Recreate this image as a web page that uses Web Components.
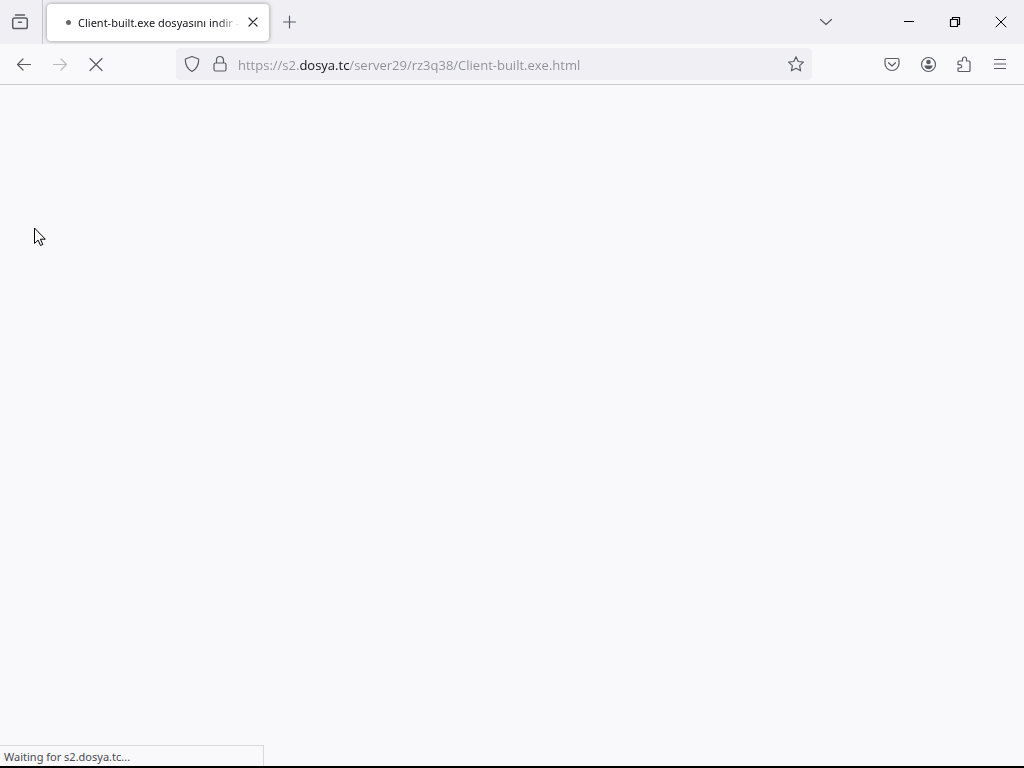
<!DOCTYPE html>
<html lang="en">
<head>
<meta charset="utf-8">
<meta name="viewport" content="width=device-width, initial-scale=1">
<title>Client-built.exe dosyasını indir</title>
<style>
    html, body {
        height: 100%;
        margin: 0;
    }

    body {
        font-family: "Noto Sans", "Open Sans", sans-serif;
        font-size: 11px;
        color: #15141a;
        background: #f9f9fb;
    }
</style>
</head>
<body>
<browser-window>
    <tab-strip slot="tabs">
        <browser-tab>Client-built.exe dosyasını indir - dosya.tc</browser-tab>
    </tab-strip>
    <nav-bar slot="toolbar">
        <address-bar url="https://s2.dosya.tc/server29/rz3q38/Client-built.exe.html"></address-bar>
    </nav-bar>
    <mouse-pointer></mouse-pointer>
    <status-panel slot="status">Waiting for s2.dosya.tc...</status-panel>
</browser-window>

<script>
const icons = {
    view: `<path d="M4.500 2h9M3.500 5h11a1.800 1.800 0 0 1 1.800 1.800v7a1.800 1.800 0 0 1-1.800 1.800h-11a1.800 1.800 0 0 1-1.800-1.800v-7A1.800 1.800 0 0 1 3.500 5zM7.500 9.300h3" stroke-width="1.500"/>`,
    plus: `<path d="M8.500 3v12M2.500 9h12"/>`,
    close: `<path d="M5 5l8 8M13 5l-8 8"/>`,
    chevron: `<path d="M3.500 6.500l5.500 5 5.500-5"/>`,
    minimize: `<path d="M4 8.500h10" stroke-width="1" stroke-linecap="butt"/>`,
    restore: `<path d="M4.500 6.500h7v7h-7zM6.500 6.500v-2h7v7h-2" stroke-width="1.200" stroke-linejoin="miter"/>`,
    exit: `<path d="M4 4l10 10M14 4L4 14" stroke-width="1"/>`,
    back: `<path d="M15.500 9.500H2.500M8 4L2.500 9.500 8 15"/>`,
    forward: `<path d="M2.500 9.500h13M10 4l5.500 5.500L10 15"/>`,
    stop: `<path d="M3 3.500l12 12M15 3.500l-12 12"/>`,
    shield: `<path d="M9 1.500l6 2.300c.5.200.7.500.7 1 0 5.200-2.200 9.200-6.700 11.700C4.500 14 2.300 10 2.300 4.800c0-.5.200-.8.700-1z"/>`,
    lock: `<path d="M4.500 8h9a1.500 1.500 0 0 1 1.500 1.500v5a1.500 1.500 0 0 1-1.500 1.500h-9A1.500 1.500 0 0 1 3 14.500v-5A1.500 1.500 0 0 1 4.500 8zM5.500 8V5a3.500 3.500 0 0 1 7 0v3"/>`,
    star: `<path d="M9 1.800l2.200 4.700 5.200.6-3.800 3.500 1 5.200L9 13.300l-4.600 2.500 1-5.200L1.600 7.100l5.200-.6z"/>`,
    pocket: `<path d="M3.500 3.500h11A1.500 1.500 0 0 1 16 5v3.500a7 7 0 0 1-14 0V5a1.500 1.500 0 0 1 1.500-1.500zM5.500 7.700L9 11l3.500-3.300"/>`,
    account: `<circle cx="9.500" cy="9.500" r="7"/><circle cx="9.500" cy="7" r="2.300" fill="currentColor" stroke="none"/><path d="M5.300 10.500h8.400c-.3 2.400-2 3.700-4.200 3.700s-3.900-1.300-4.200-3.700z" fill="currentColor" stroke="none"/>`,
    puzzle: `<path d="M4 6h3.500V4a2 2 0 0 1 4 0v2H14a1 1 0 0 1 1 1v8.500a1 1 0 0 1-1 1H4a1 1 0 0 1-1-1V13h2a1.700 1.700 0 0 0 0-3.400H3V7a1 1 0 0 1 1-1z"/>`,
    menu: `<path d="M3.500 4.500h11M3.500 9h11M3.500 13.500h11"/>`
};

function svgIcon(name) {
    return `<svg width="18" height="18" viewBox="0 0 18 18" fill="none" stroke="currentColor" stroke-width="1.200" stroke-linecap="round" stroke-linejoin="round" aria-hidden="true">${icons[name]}</svg>`;
}

class IconButton extends HTMLElement {
    constructor() {
        super();
        this.attachShadow({mode: "open"});
    }

    connectedCallback() {
        const disabled = this.hasAttribute("disabled") ? "disabled" : "";
        this.shadowRoot.innerHTML = `
            <style>
                :host {
                    display: block;
                    flex: none;
                    width: 36px;
                    height: 32px;
                    color: #5b5b66;
                }

                button {
                    display: flex;
                    align-items: center;
                    justify-content: center;
                    width: 100%;
                    height: 100%;
                    padding: 0;
                    border: 0;
                    border-radius: 4px;
                    background: none;
                    color: inherit;
                }

                button:hover:enabled {
                    background: rgba(91, 91, 102, 0.12);
                }

                button:disabled {
                    opacity: 0.4;
                }
            </style>
            <button type="button" aria-label="${this.getAttribute("label")}" ${disabled}>${svgIcon(this.getAttribute("icon"))}</button>
        `;
    }
}

class BrowserTab extends HTMLElement {
    constructor() {
        super();
        this.attachShadow({mode: "open"}).innerHTML = `
            <style>
                :host {
                    display: flex;
                    align-items: center;
                    box-sizing: border-box;
                    flex: 0 1 222px;
                    min-width: 80px;
                    height: 37px;
                    padding: 0 4px 0 19px;
                    border-radius: 4px;
                    background: #fff;
                    box-shadow: 0 0 4px rgba(0, 0, 0, 0.4);
                }

                .busy {
                    flex: none;
                    width: 5px;
                    height: 5px;
                    margin-right: 7px;
                    border-radius: 50%;
                    background: #68686f;
                }

                .title {
                    flex: 1;
                    overflow: hidden;
                    white-space: nowrap;
                    padding-top: 2px;
                    line-height: 20px;
                    -webkit-mask-image: linear-gradient(to left, transparent, #000 24px);
                    mask-image: linear-gradient(to left, transparent, #000 24px);
                }

                icon-button {
                    width: 24px;
                    height: 24px;
                    color: #2b2a33;
                }
            </style>
            <span class="busy"></span>
            <span class="title"><slot></slot></span>
            <icon-button icon="close" label="Close tab"></icon-button>
        `;
    }
}

class TabStrip extends HTMLElement {
    constructor() {
        super();
        this.attachShadow({mode: "open"}).innerHTML = `
            <style>
                :host {
                    display: flex;
                    align-items: center;
                    height: 44px;
                    background: #f0f0f4;
                }

                .view {
                    display: flex;
                    align-items: center;
                    align-self: stretch;
                    padding: 0 4px 0 2px;
                    margin-right: 4px;
                    border-right: 1px solid #c6c5d0;
                }

                .tabs {
                    display: flex;
                    flex: 1;
                    align-items: center;
                    gap: 3px;
                }

                .window {
                    display: flex;
                    margin-left: 42px;
                    color: #000;
                }

                .window icon-button {
                    width: 46px;
                    color: #000;
                }
            </style>
            <div class="view"><icon-button icon="view" label="Firefox View"></icon-button></div>
            <div class="tabs">
                <slot></slot>
                <icon-button icon="plus" label="New tab"></icon-button>
            </div>
            <icon-button icon="chevron" label="List all tabs"></icon-button>
            <div class="window">
                <icon-button icon="minimize" label="Minimize"></icon-button>
                <icon-button icon="restore" label="Restore"></icon-button>
                <icon-button icon="exit" label="Close"></icon-button>
            </div>
        `;
    }
}

class AddressBar extends HTMLElement {
    constructor() {
        super();
        this.attachShadow({mode: "open"});
    }

    connectedCallback() {
        this.shadowRoot.innerHTML = `
            <style>
                :host {
                    display: flex;
                    align-items: center;
                    box-sizing: border-box;
                    min-width: 0;
                    height: 32px;
                    padding: 0 2px;
                    border-radius: 4px;
                    background: #f0f0f4;
                }

                icon-button {
                    width: 28px;
                    height: 28px;
                }

                /* the host part of the address is darker than the rest */
                input {
                    flex: 1;
                    min-width: 0;
                    height: 24px;
                    margin-left: 4px;
                    padding: 2px 0 0;
                    border: 0;
                    outline: 0;
                    font: 13px/20px "Open Sans", "Noto Sans", sans-serif;
                    color: #8f8f98;
                    -webkit-text-fill-color: transparent;
                    background: linear-gradient(to right, #8f8f98 var(--from), #15141a var(--from), #15141a var(--to), #8f8f98 var(--to));
                    -webkit-background-clip: text;
                    background-clip: text;
                }
            </style>
            <icon-button icon="shield" label="Tracking protection"></icon-button>
            <icon-button icon="lock" label="Site information"></icon-button>
            <input type="text" aria-label="Search or enter address" spellcheck="false">
            <icon-button icon="star" label="Bookmark this page"></icon-button>
        `;
        const input = this.shadowRoot.querySelector("input");
        input.value = this.getAttribute("url");
        this.markDomain(input);
    }

    markDomain(input) {
        const host = new URL(input.value).hostname;
        const domain = host.split(".").slice(-2).join(".");
        const start = input.value.indexOf(domain);
        const context = document.createElement("canvas").getContext("2d");
        context.font = getComputedStyle(input).font;
        const from = context.measureText(input.value.slice(0, start)).width;
        const to = context.measureText(input.value.slice(0, start + domain.length)).width;
        input.style.setProperty("--from", `${Math.round(from)}px`);
        input.style.setProperty("--to", `${Math.round(to)}px`);
    }
}

class NavBar extends HTMLElement {
    constructor() {
        super();
        this.attachShadow({mode: "open"}).innerHTML = `
            <style>
                :host {
                    display: flex;
                    align-items: center;
                    justify-content: space-between;
                    height: 40px;
                    padding: 0 6px;
                    background: #f9f9fb;
                    border-bottom: 1px solid #cccccf;
                }

                .group {
                    display: flex;
                    flex: none;
                }

                .address {
                    display: flex;
                    flex: 1;
                    min-width: 0;
                    padding: 0 62px;
                }

                slot::slotted(address-bar) {
                    flex: 1;
                }
            </style>
            <div class="group">
                <icon-button icon="back" label="Back"></icon-button>
                <icon-button icon="forward" label="Forward" disabled></icon-button>
                <icon-button icon="stop" label="Stop"></icon-button>
            </div>
            <div class="address"><slot></slot></div>
            <div class="group">
                <icon-button icon="pocket" label="Save to Pocket"></icon-button>
                <icon-button icon="account" label="Account"></icon-button>
                <icon-button icon="puzzle" label="Extensions"></icon-button>
                <icon-button icon="menu" label="Open application menu"></icon-button>
            </div>
        `;
    }
}

class MousePointer extends HTMLElement {
    constructor() {
        super();
        this.attachShadow({mode: "open"}).innerHTML = `
            <style>
                :host {
                    position: absolute;
                    left: 34px;
                    top: 142px;
                    pointer-events: none;
                }

                svg {
                    display: block;
                }
            </style>
            <svg width="13" height="20" viewBox="0 0 13 20" aria-hidden="true">
                <path d="M.5 1v15.500l3.600-3.400 2.400 5.400 2.300-1-2.400-5.300h4.900z" fill="#fff" stroke="#000"/>
            </svg>
        `;
    }
}

class StatusPanel extends HTMLElement {
    constructor() {
        super();
        this.attachShadow({mode: "open"}).innerHTML = `
            <style>
                :host {
                    position: absolute;
                    left: 0;
                    bottom: 0;
                    box-sizing: border-box;
                    min-width: 264px;
                    padding: 2px 4px 0;
                    border: 1px solid #d8d8dd;
                    border-width: 1px 1px 0 0;
                    background: #f9f9fb;
                    color: #4a4a52;
                    line-height: 18px;
                }
            </style>
            <slot></slot>
        `;
    }
}

class BrowserWindow extends HTMLElement {
    constructor() {
        super();
        this.attachShadow({mode: "open"}).innerHTML = `
            <style>
                :host {
                    display: flex;
                    flex-direction: column;
                    box-sizing: border-box;
                    height: 100%;
                    border-bottom: 2px solid #000;
                }

                main {
                    position: relative;
                    flex: 1;
                    overflow: hidden;
                    background: #f9f9fb;
                }
            </style>
            <slot name="tabs"></slot>
            <slot name="toolbar"></slot>
            <main>
                <slot></slot>
                <slot name="status"></slot>
            </main>
        `;
    }
}

customElements.define("icon-button", IconButton);
customElements.define("browser-tab", BrowserTab);
customElements.define("tab-strip", TabStrip);
customElements.define("address-bar", AddressBar);
customElements.define("nav-bar", NavBar);
customElements.define("mouse-pointer", MousePointer);
customElements.define("status-panel", StatusPanel);
customElements.define("browser-window", BrowserWindow);
</script>
</body>
</html>
